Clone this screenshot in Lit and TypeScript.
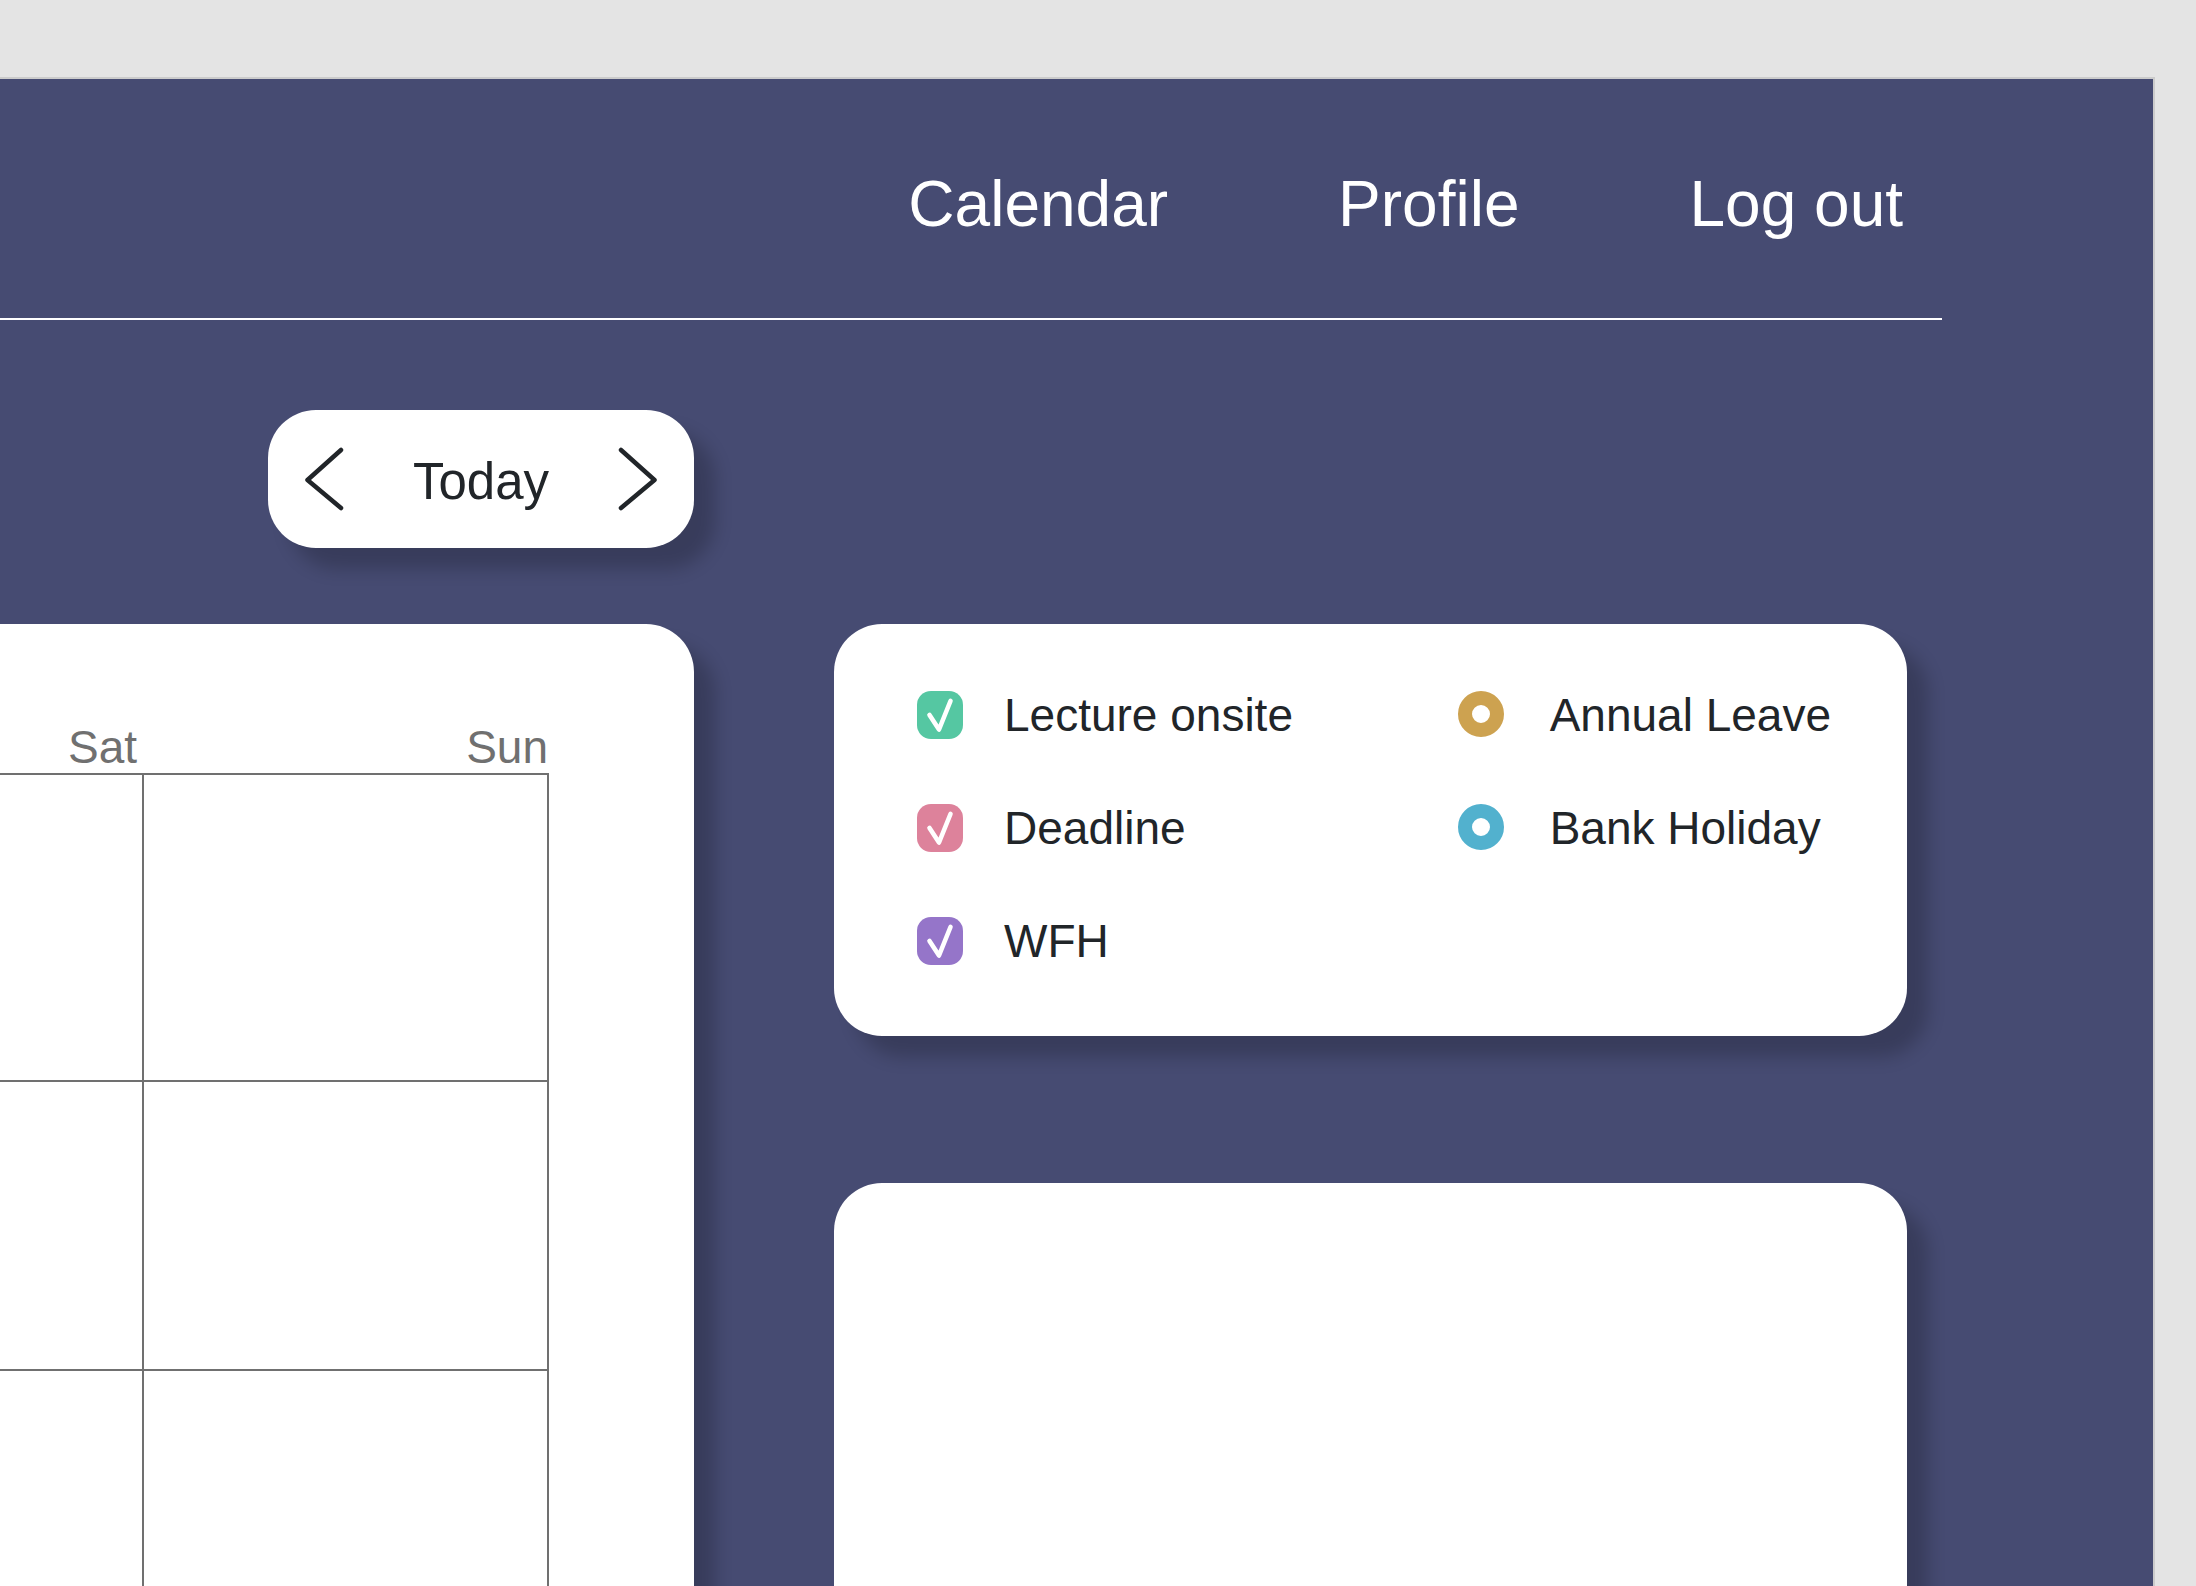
import { LitElement, html, css, svg } from "lit";
import { customElement, property } from "lit/decorators.js";
import { classMap } from "lit/directives/class-map.js";

interface LegendEntry {
  id: string;
  label: string;
  tone: string;
}

const eventTypes: LegendEntry[] = [
  { id: "lecture", label: "Lecture onsite", tone: "green" },
  { id: "deadline", label: "Deadline", tone: "pink" },
  { id: "wfh", label: "WFH", tone: "purple" },
];

const leaveTypes: LegendEntry[] = [
  { id: "annual", label: "Annual Leave", tone: "gold" },
  { id: "bank", label: "Bank Holiday", tone: "blue" },
];

@customElement("site-nav")
export class SiteNav extends LitElement {
  static styles = css`
    :host {
      display: block;
    }
    .nav {
      display: flex;
      justify-content: flex-end;
      gap: 170px;
      box-sizing: border-box;
      height: 241px;
      margin-right: 211px;
      padding: 88px 39px 0 0;
      border-bottom: 2px solid #fff;
    }
    .link {
      color: #fff;
      font-size: 64px;
      line-height: 74px;
      text-decoration: none;
      white-space: nowrap;
    }
  `;

  render() {
    return html`
      <nav class="nav">
        <a class="link" href="#calendar">Calendar</a>
        <a class="link" href="#profile">Profile</a>
        <a class="link" href="#logout">Log out</a>
      </nav>
    `;
  }
}

@customElement("day-switcher")
export class DaySwitcher extends LitElement {
  static styles = css`
    :host {
      display: block;
    }
    .switcher {
      display: flex;
      align-items: center;
      justify-content: space-between;
      box-sizing: border-box;
      width: 426px;
      height: 138px;
      padding: 0 32px;
      border-radius: 48px;
      background: #fff;
      box-shadow: 21px 21px 18px rgba(0, 0, 0, 0.2);
    }
    .step,
    .today {
      margin: 0;
      padding: 0;
      border: 0;
      background: none;
      color: #212529;
      font: inherit;
    }
    .step {
      display: flex;
    }
    .today {
      padding-top: 6px;
      font-size: 51px;
      line-height: 58px;
    }
    .chevron {
      width: 48px;
      height: 68px;
      fill: none;
      stroke: currentColor;
      stroke-width: 4.5;
      stroke-linecap: round;
      stroke-linejoin: round;
    }
  `;

  render() {
    return html`
      <div class="switcher">
        <button class="step" aria-label="Previous">
          <svg class="chevron" viewBox="0 0 48 68"><path d="M41 5 7.500 35 41 63" /></svg>
        </button>
        <button class="today">Today</button>
        <button class="step" aria-label="Next">
          <svg class="chevron" viewBox="0 0 48 68"><path d="M7 5 40.500 35 7 63" /></svg>
        </button>
      </div>
    `;
  }
}

@customElement("month-grid")
export class MonthGrid extends LitElement {
  static styles = css`
    :host {
      display: block;
      flex: 1;
    }
    .card {
      box-sizing: border-box;
      height: 100%;
      padding: 98px 145px 0 0;
      border-radius: 0 48px 0 0;
      background: #fff;
      box-shadow: 21px 21px 18px rgba(0, 0, 0, 0.2);
    }
    .grid {
      width: 100%;
      border-collapse: collapse;
      table-layout: fixed;
    }
    .day {
      height: 51px;
      padding: 0;
      color: #707070;
      font-size: 46px;
      font-weight: 400;
      line-height: 51px;
      text-align: right;
      vertical-align: bottom;
    }
    .day.sat {
      width: 143px;
      padding-right: 6px;
      box-sizing: border-box;
    }
    .cell {
      box-sizing: border-box;
      height: 289px;
      padding: 0;
      border: 2px solid #707070;
      border-left: 0;
    }
    .week.first .cell {
      height: 307px;
    }
  `;

  render() {
    const weeks = [0, 1, 2, 3];
    return html`
      <div class="card">
        <table class="grid">
          <thead>
            <tr>
              <th class="day sat" scope="col">Sat</th>
              <th class="day" scope="col">Sun</th>
            </tr>
          </thead>
          <tbody>
            ${weeks.map(
              (week) => html`
                <tr class=${classMap({ week: true, first: week === 0 })}>
                  <td class="cell"></td>
                  <td class="cell"></td>
                </tr>
              `,
            )}
          </tbody>
        </table>
      </div>
    `;
  }
}

@customElement("legend-option")
export class LegendOption extends LitElement {
  @property() kind: "checkbox" | "radio" = "checkbox";
  @property() name = "";
  @property() label = "";
  @property() tone = "";

  static styles = css`
    :host {
      display: block;
    }
    .option {
      display: flex;
      align-items: flex-start;
      gap: 41px;
      height: 53px;
      color: #212529;
      font-size: 46px;
      line-height: 53px;
      white-space: nowrap;
    }
    .option.radio {
      gap: 46px;
    }
    .control {
      display: grid;
      flex: none;
      padding-top: 2px;
    }
    .input,
    .tick {
      grid-area: 1 / 1;
    }
    .input {
      appearance: none;
      box-sizing: border-box;
      width: 46px;
      height: 48px;
      margin: 0;
      border-radius: 14px;
    }
    .radio .input {
      height: 46px;
      border: 14px solid;
      border-radius: 50%;
      background: #fff;
    }
    .tick {
      width: 46px;
      height: 48px;
      fill: none;
      stroke: #fff;
      stroke-width: 4.6;
      stroke-linecap: round;
      stroke-linejoin: round;
      pointer-events: none;
    }
    .green {
      background: #55c7a2;
    }
    .pink {
      background: #dd829b;
    }
    .purple {
      background: #9575c9;
    }
    .radio .gold {
      border-color: #cda250;
    }
    .radio .blue {
      border-color: #52b1ce;
    }
  `;

  render() {
    const radio = this.kind === "radio";
    const tick = svg`<path d="M12.500 24 22 38.500 33.500 10" />`;
    return html`
      <label class=${classMap({ option: true, radio })}>
        <span class="control">
          <input
            class=${classMap({ input: true, [this.tone]: true })}
            type=${this.kind}
            name=${this.name}
            ?checked=${!radio}
          />
          ${radio ? "" : html`<svg class="tick" viewBox="0 0 46 48">${tick}</svg>`}
        </span>
        <span>${this.label}</span>
      </label>
    `;
  }
}

@customElement("event-legend")
export class EventLegend extends LitElement {
  static styles = css`
    :host {
      display: block;
    }
    .card {
      display: flex;
      justify-content: space-between;
      box-sizing: border-box;
      height: 412px;
      padding: 65px 76px 0 83px;
      border-radius: 48px;
      background: #fff;
      box-shadow: 21px 21px 18px rgba(0, 0, 0, 0.2);
    }
    .column {
      display: flex;
      flex-direction: column;
      gap: 60px;
    }
  `;

  render() {
    return html`
      <section class="card">
        <div class="column">
          ${eventTypes.map(
            (entry) => html`<legend-option
              kind="checkbox"
              .name=${entry.id}
              .label=${entry.label}
              .tone=${entry.tone}
            ></legend-option>`,
          )}
        </div>
        <div class="column">
          ${leaveTypes.map(
            (entry) => html`<legend-option
              kind="radio"
              .name=${entry.id}
              .label=${entry.label}
              .tone=${entry.tone}
            ></legend-option>`,
          )}
        </div>
      </section>
    `;
  }
}

@customElement("app-root")
export class AppRoot extends LitElement {
  static styles = css`
    :host {
      display: flex;
      box-sizing: border-box;
      height: 100vh;
      padding: 77px 41px 0 0;
      overflow: hidden;
      background: #e4e4e4;
      font-family: "Liberation Sans", Arial, sans-serif;
    }
    .board {
      display: flex;
      flex: 1;
      flex-direction: column;
      min-width: 0;
      border: 2px solid #cbcbcb;
      border-width: 2px 2px 0 0;
      background: #464b72;
      overflow: hidden;
    }
    .content {
      display: grid;
      flex: 1;
      grid-template-columns: minmax(694px, 1fr) minmax(0, 1073px);
      column-gap: 140px;
      min-height: 0;
      padding: 90px 246px 0 0;
    }
    .main,
    .side {
      display: flex;
      flex-direction: column;
      min-height: 0;
    }
    .main {
      gap: 76px;
    }
    .switch {
      align-self: flex-end;
    }
    .side {
      gap: 147px;
      padding-top: 214px;
    }
    .details {
      flex: 1;
      border-radius: 48px 48px 0 0;
      background: #fff;
      box-shadow: 21px 21px 18px rgba(0, 0, 0, 0.2);
    }
  `;

  render() {
    return html`
      <div class="board">
        <site-nav></site-nav>
        <div class="content">
          <main class="main">
            <day-switcher class="switch"></day-switcher>
            <month-grid></month-grid>
          </main>
          <aside class="side">
            <event-legend></event-legend>
            <section class="details"></section>
          </aside>
        </div>
      </div>
    `;
  }
}
